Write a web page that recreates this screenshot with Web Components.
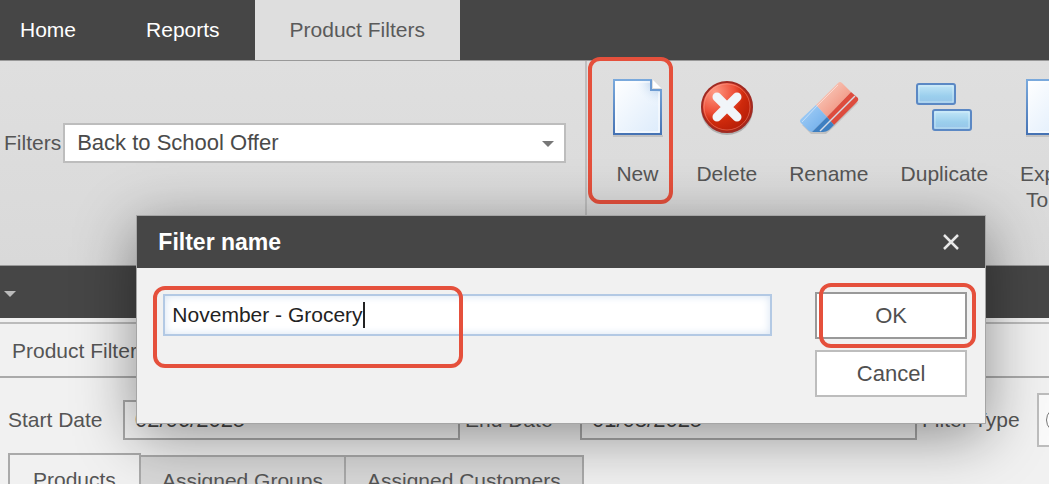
<!DOCTYPE html>
<html lang="en">
<head>
<meta charset="utf-8">
<meta name="viewport" content="width=device-width, initial-scale=1">
<title>Product Filters</title>
<style>
  html, body {
    height: 100%;
    margin: 0;
  }

  body {
    overflow: hidden;
    font: 21px/26px "Liberation Sans", Arial, sans-serif;
    color: #555555;
    background: #f1f1f1;
  }
</style>
</head>
<body>
<filters-app></filters-app>

<script>
  const icons = {
    page: `
      <defs>
        <linearGradient id="paper" x1="0" y1="0" x2="1" y2="1">
          <stop offset="0" stop-color="#ffffff"/>
          <stop offset="1" stop-color="#dcebfb"/>
        </linearGradient>
        <linearGradient id="edge" x1="0" y1="0" x2="0" y2="1">
          <stop offset="0" stop-color="#7aa9dc"/>
          <stop offset="1" stop-color="#4673b4"/>
        </linearGradient>
        <radialGradient id="fold" cx="1" cy="0" r="1">
          <stop offset=".2" stop-color="#b4cdea"/>
          <stop offset="1" stop-color="#f5faff" stop-opacity="0"/>
        </radialGradient>
      </defs>
      <path d="M6 59h50" stroke="#000" stroke-opacity=".12" stroke-width="2"/>
      <path d="M7 3h37v10h10v44H7z" fill="url(#paper)" stroke="url(#edge)" stroke-width="2"/>
      <path d="M27 4h16v10h10v16H27z" fill="url(#fold)"/>
      <path d="M9 55V5h34M9 55h43V15" fill="none" stroke="#fff"/>
      <path d="M46 3l8 8h-8z" fill="#fff"/>
      <path d="M44 3v10h10" fill="none" stroke="#6c9bd2" stroke-width="2"/>`,
    remove: `
      <defs>
        <radialGradient id="red" cx=".25" cy=".2" r=".9">
          <stop offset="0" stop-color="#ff9a84"/>
          <stop offset=".45" stop-color="#ee4f38"/>
          <stop offset=".65" stop-color="#cf2a0c"/>
          <stop offset="1" stop-color="#b31c08"/>
        </radialGradient>
      </defs>
      <circle cx="30" cy="32" r="26" fill="#000" opacity=".2"/>
      <circle cx="30" cy="30" r="25" fill="url(#red)" stroke="#a02a22" stroke-width="2"/>
      <circle cx="30" cy="30" r="23" fill="none" stroke="#ffb0a0" stroke-opacity=".4"/>
      <path d="M20 20l20 20M40 20L20 40" stroke="#f1f5f9" stroke-width="9" stroke-linecap="round"/>`,
    eraser: `
      <defs>
        <linearGradient id="pink" x1="0" y1="0" x2="1" y2="1">
          <stop offset="0" stop-color="#fbd9cb"/>
          <stop offset="1" stop-color="#ee806c"/>
        </linearGradient>
        <linearGradient id="sky" x1="0" y1="0" x2="1" y2="1">
          <stop offset="0" stop-color="#a9d2f8"/>
          <stop offset="1" stop-color="#69aae9"/>
        </linearGradient>
      </defs>
      <path d="M3 48l9 9h15l9-8 24-24z" fill="#000" opacity=".12"/>
      <path d="M17 28L39 6q2-2 4 0l9 9-24 25z" fill="url(#pink)"/>
      <path d="M52 15l7 6q1 2-1 4L35 48l-7-8z" fill="#dd4c3e"/>
      <path d="M17 28l11 12-15 15-3-1-8-8q-2-2 0-4z" fill="url(#sky)"/>
      <path d="M28 40l7 8-5 5q-3 2-6 2H13z" fill="#3e7fc1"/>
      <path d="M56 19L21 54" stroke="#d6dbe5" stroke-width="1.5"/>
      <path d="M39 8L18 29 3 45" stroke="#fff" stroke-opacity=".45" fill="none"/>`,
    blocks: `
      <defs>
        <linearGradient id="glass" x1="0" y1="0" x2="0" y2="1">
          <stop offset="0" stop-color="#c5e8f8"/>
          <stop offset=".6" stop-color="#9bcfed"/>
          <stop offset="1" stop-color="#96c4e8"/>
        </linearGradient>
      </defs>
      <g stroke="#5b88c4" stroke-width="2" fill="url(#glass)">
        <rect x="3" y="7" width="38" height="20" rx="2"/>
        <rect x="19" y="33" width="38" height="20" rx="2"/>
      </g>
      <g fill="none" stroke="#dff4fc" stroke-opacity=".6">
        <rect x="5" y="9" width="34" height="16"/>
        <rect x="21" y="35" width="34" height="16"/>
      </g>`
  };

  // Tab strip along the top of the window.
  class AppTabs extends HTMLElement {
    constructor() {
      super();
      this.attachShadow({ mode: 'open' });
      this.shadowRoot.innerHTML = `
        <style>
          :host {
            display: block;
            background: #464646;
          }

          nav {
            display: flex;
            height: 60px;
          }

          a {
            padding: 17px 35px;
            color: #ffffff;
            text-decoration: none;
          }

          a:first-child {
            padding-left: 20px;
          }

          a[aria-current] {
            background: #dedede;
            color: #5a5a5a;
          }
        </style>
        <nav>
          <a href="#home">Home</a>
          <a href="#reports">Reports</a>
          <a href="#filters" aria-current="page">Product Filters</a>
        </nav>
      `;
    }
  }

  // Large toolbar button: icon above its label.
  class RibbonButton extends HTMLElement {
    constructor() {
      super();
      this.attachShadow({ mode: 'open' });
    }

    connectedCallback() {
      const icon = icons[this.getAttribute('icon')];

      this.shadowRoot.innerHTML = `
        <style>
          :host {
            display: block;
            flex: none;
            position: relative;
          }

          button {
            display: grid;
            justify-items: center;
            gap: 24px;
            min-width: 86px;
            padding: 0 16px;
            border: 0;
            background: none;
            color: inherit;
            font: inherit;
          }

          svg {
            display: block;
            width: 60px;
            height: 60px;
            margin: 0 -8px;
          }

          /* Highlight ring around the marked button. */
          :host([marked])::after {
            content: "";
            position: absolute;
            inset: -20px 7px -17px -6px;
            border: 4px solid #e5503c;
            border-radius: 12px;
          }
        </style>
        <button type="button">
          <svg viewBox="0 0 60 60" aria-hidden="true">${icon}</svg>
          <span><slot></slot></span>
        </button>
      `;
    }
  }

  class FilterRibbon extends HTMLElement {
    constructor() {
      super();
      this.attachShadow({ mode: 'open' });
      this.shadowRoot.innerHTML = `
        <style>
          :host {
            display: flex;
            height: 206px;
            border-top: 1px solid #999999;
            border-bottom: 1px solid #999999;
            background: linear-gradient(#dfdfdf, #d9d9d9);
            box-sizing: border-box;
          }

          .picker {
            flex: 0 0 56%;
            display: flex;
            align-items: flex-start;
            gap: 2px;
            padding: 62px 19px 0 4px;
            border-right: 2px solid #bfbfbf;
            box-sizing: border-box;
          }

          label {
            line-height: 40px;
          }

          .box {
            flex: 1;
            position: relative;
          }

          select {
            appearance: none;
            width: 100%;
            height: 40px;
            padding: 0 12px;
            border: 2px solid #bdbdbd;
            border-radius: 0;
            background: #ffffff;
            color: #4a4a4a;
            font: inherit;
            font-size: 22px;
          }

          .box::after {
            content: "";
            position: absolute;
            right: 12px;
            top: 18px;
            border: 6px solid transparent;
            border-top-color: #777777;
            border-bottom: 0;
            pointer-events: none;
          }

          .actions {
            flex: 1;
            display: flex;
            align-items: flex-start;
            min-width: 0;
            padding: 16px 0 0 7px;
          }
        </style>
        <div class="picker">
          <label for="filter">Filters</label>
          <div class="box">
            <select id="filter"><option>Back to School Offer</option></select>
          </div>
        </div>
        <div class="actions">
          <ribbon-button icon="page" marked>New</ribbon-button>
          <ribbon-button icon="remove">Delete</ribbon-button>
          <ribbon-button icon="eraser">Rename</ribbon-button>
          <ribbon-button icon="blocks">Duplicate</ribbon-button>
          <ribbon-button icon="page">Export<br>To all</ribbon-button>
        </div>
      `;
    }
  }

  class FilterDetails extends HTMLElement {
    constructor() {
      super();
      this.attachShadow({ mode: 'open' });
      this.shadowRoot.innerHTML = `
        <style>
          :host {
            display: block;
          }

          .strip {
            height: 52px;
            padding: 25px 4px 0;
            background: #464646;
            box-sizing: border-box;
          }

          .strip i {
            display: block;
            width: 0;
            border: 6px solid transparent;
            border-top-color: #bbbbbb;
            border-bottom: 0;
          }

          h2 {
            margin: 4px 0 0;
            padding: 14px 12px;
            border-top: 2px solid #bbbbbb;
            border-bottom: 2px solid #aaaaaa;
            font-size: 21px;
            font-weight: normal;
            line-height: 26px;
            height: 56px;
            box-sizing: border-box;
          }

          .fields {
            display: flex;
            align-items: center;
            gap: 5px;
            height: 60px;
            padding: 12px 0 0 8px;
          }

          .fields label {
            flex: none;
            min-width: 110px;
          }

          .fields input {
            flex: 1 1 0;
            min-width: 0;
            height: 40px;
            padding: 0 10px;
            border: 2px solid #aaaaaa;
            background: #f6f6f6;
            color: #444444;
            font: inherit;
            font-size: 22px;
            box-sizing: border-box;
          }

          .option {
            flex: none;
            width: 12px;
            height: 54px;
            border: 2px solid #bdbdbd;
            border-right: 0;
            background: #fafafa;
            overflow: hidden;
            box-sizing: border-box;
          }

          .option input {
            width: 26px;
            height: 26px;
            margin: 12px 0 0 7px;
          }

          .tabs {
            display: flex;
            align-items: flex-end;
            padding: 3px 0 0 8px;
          }

          .tabs button {
            height: 52px;
            padding: 0 21px;
            border: 2px solid #aaaaaa;
            border-left-width: 0;
            background: #d8d8d8;
            color: inherit;
            font: inherit;
          }

          .tabs button:first-child {
            height: 54px;
            padding: 0 23px;
            border-left-width: 2px;
            background: #f1f1f1;
          }
        </style>
        <div class="strip"><i></i></div>
        <h2>Product Filters</h2>
        <div class="fields">
          <label for="start">Start Date</label>
          <input id="start" value="02/06/2025">
          <label for="end">End Date</label>
          <input id="end" value="01/08/2025">
          <label for="type">Filter Type</label>
          <div class="option"><input id="type" type="radio"></div>
        </div>
        <div class="tabs" role="tablist">
          <button role="tab" aria-selected="true">Products</button>
          <button role="tab">Assigned Groups</button>
          <button role="tab">Assigned Customers</button>
        </div>
      `;
    }
  }

  class NameDialog extends HTMLElement {
    constructor() {
      super();
      this.attachShadow({ mode: 'open' });
      this.shadowRoot.innerHTML = `
        <style>
          :host {
            display: block;
            border: 1px solid #a5a5a5;
            background: #f1f1f1;
            box-shadow: 0 12px 56px rgba(0, 0, 0, 0.42);
            box-sizing: border-box;
          }

          header {
            display: flex;
            align-items: center;
            justify-content: space-between;
            height: 52px;
            padding: 0 25px 0 21px;
            background: #464646;
            color: #ffffff;
          }

          h1 {
            margin: 0;
            font-size: 23px;
            font-weight: bold;
          }

          .close {
            padding: 0;
            border: 0;
            background: none;
          }

          .close svg {
            display: block;
            width: 18px;
            height: 18px;
          }

          form {
            display: grid;
            grid-template-columns: 1fr 152px;
            gap: 43px;
            padding: 24px 18px 26px 26px;
          }

          .name,
          .accept {
            position: relative;
          }

          .name input {
            width: 100%;
            height: 42px;
            margin-top: 2px;
            padding: 0 7px;
            border: 2px solid #b3c9e4;
            background: #ffffff;
            box-shadow: inset 0 0 8px #d5e2f2;
            color: #222222;
            font: inherit;
            outline: 0;
            box-sizing: border-box;
          }

          .caret {
            position: absolute;
            left: 200px;
            top: 10px;
            width: 2px;
            height: 26px;
            background: #222222;
          }

          .name::after,
          .accept::after {
            content: "";
            position: absolute;
            border: 4px solid #e5503c;
            border-radius: 12px;
            pointer-events: none;
          }

          .name::after {
            left: -10px;
            top: -6px;
            width: 302px;
            height: 74px;
          }

          .accept::after {
            inset: -9px -9px -9px 4px;
          }

          .buttons {
            display: grid;
            gap: 11px;
          }

          .buttons button {
            display: block;
            width: 100%;
            height: 47px;
            border: 2px solid #bdbdbd;
            background: #ffffff;
            color: #505050;
            font: inherit;
            font-size: 22px;
          }

          .buttons .accept button {
            border-color: #999999;
          }
        </style>
        <header>
          <h1 id="title">Filter name</h1>
          <button class="close" type="button" aria-label="Close">
            <svg viewBox="0 0 18 18"><path d="M2 2l14 14M16 2L2 16" stroke="#e8e8e8" stroke-width="2.5"/></svg>
          </button>
        </header>
        <form>
          <div class="name">
            <input aria-labelledby="title" value="November - Grocery">
            <span class="caret"></span>
          </div>
          <div class="buttons">
            <div class="accept"><button type="button">OK</button></div>
            <button type="button">Cancel</button>
          </div>
        </form>
      `;
    }
  }

  class FiltersApp extends HTMLElement {
    constructor() {
      super();
      this.attachShadow({ mode: 'open' });
      this.shadowRoot.innerHTML = `
        <style>
          :host {
            display: block;
            position: relative;
            min-height: 100%;
            overflow: hidden;
          }

          name-dialog {
            position: absolute;
            left: 13%;
            right: 6%;
            top: 215px;
          }
        </style>
        <app-tabs></app-tabs>
        <filter-ribbon></filter-ribbon>
        <filter-details></filter-details>
        <name-dialog role="dialog"></name-dialog>
      `;
    }
  }

  customElements.define('app-tabs', AppTabs);
  customElements.define('ribbon-button', RibbonButton);
  customElements.define('filter-ribbon', FilterRibbon);
  customElements.define('filter-details', FilterDetails);
  customElements.define('name-dialog', NameDialog);
  customElements.define('filters-app', FiltersApp);
</script>
</body>
</html>
